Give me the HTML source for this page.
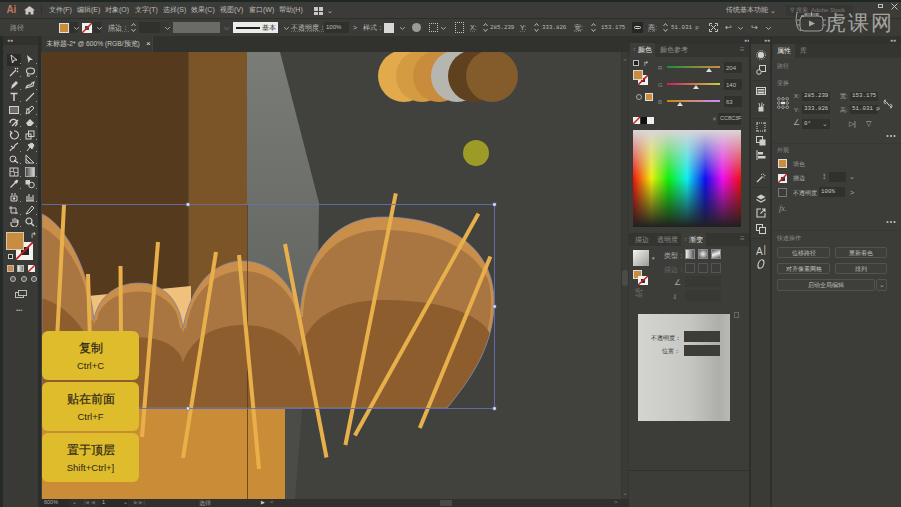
<!DOCTYPE html>
<html><head><meta charset="utf-8">
<style>
*{margin:0;padding:0;box-sizing:border-box}
html,body{width:901px;height:507px;overflow:hidden;background:#41423d;font-family:"Liberation Sans",sans-serif;color:#c4c4c0}
.a{position:absolute}
.t{position:absolute;white-space:nowrap;font-size:7px;line-height:1;color:#bdbdb8}
#menubar{left:0;top:0;width:901px;height:18px;background:#3b3c38;border-top:2px solid #1e2626}
#ctrl{left:0;top:18px;width:901px;height:18px;background:#3a3b37;border-top:1px solid #2e2f2c}
#tabs{left:41px;top:36px;width:588px;height:16px;background:#31322e}
#tool{left:0;top:36px;width:41px;height:471px;background:#393a36;border-left:3px solid #242a28;border-right:3px solid #2c2d2a}
#canvas{left:42px;top:52px;width:579px;height:447px;overflow:hidden}
#status{left:41px;top:499px;width:588px;height:8px;background:#30312e}
#vscroll{left:621px;top:52px;width:8px;height:447px;background:#353632}
#colp{left:629px;top:36px;width:120px;height:471px;background:#3c3d39}
#icons{left:749px;top:36px;width:23px;height:471px;background:#3a3b37;border-left:2px solid #2e2f2c;border-right:2px solid #2e2f2c}
#props{left:772px;top:36px;width:129px;height:471px;background:#3c3d39}
.pop{left:42px;width:97px;height:49px;background:#dfbc2b;border-radius:6px;text-align:center;color:#2e2a1a}
.p1{position:absolute;left:0;width:97px;top:9.5px;font-size:12px;line-height:14px;color:#2a2718;-webkit-text-stroke:0.2px #2a2718}
.p2{position:absolute;left:0;width:97px;top:28.5px;font-size:9.5px;line-height:11px;color:#2a2718}
</style></head><body>

<!-- CANVAS -->
<div id="canvas" class="a">
<svg width="579" height="447" viewBox="42 52 579 447">
  <defs>
    <linearGradient id="gcol" gradientUnits="userSpaceOnUse" x1="0" y1="52" x2="0" y2="409">
      <stop offset="0" stop-color="#7a7c77"/>
      <stop offset="1" stop-color="#5a5c57"/>
    </linearGradient>
  </defs>
  <rect x="0" y="0" width="700" height="600" fill="#41423d"/>
  <!-- dark brown -->
  <rect x="42" y="52" width="146" height="360" fill="#563a1e"/>
  <!-- light brown column -->
  <rect x="188.5" y="52" width="59.5" height="360" fill="#7b5427"/>
  <!-- gray slanted column -->
  <path d="M247 52 L280 52 L319 203 L316 409 L247 409 Z" fill="url(#gcol)"/>
  <path d="M285 409 L302 409 L295 499 L285 499 Z" fill="#4b4c48"/>
  <!-- peach background band -->
  <path d="M88 296 L191 286 L191 360 L88 360 Z" fill="#efc17c"/>
  <!-- bread -->
  <defs>
    <path id="bp" d="M42 214 C62 223 88 262 94 320 C97 300 113 283 139 283 C165 283 180 302 183 328 C190 290 210 261 243 261 C275 261 296 290 300 317 C302 262 330 217 383 217 C445 217 493 245 494 300 C495 345 470 380 447 408 L42 408 Z"/>
    <clipPath id="bc"><use href="#bp"/></clipPath>
  </defs>
  <use href="#bp" fill="#c98f4a"/>
  <g clip-path="url(#bc)">
    <use href="#bp" fill="#a97540" transform="translate(0,408) scale(1,0.932) translate(0,-408)"/>
    <path d="M42 214 C62 223 88 262 94 320 C97 300 113 283 139 283 C165 283 180 302 183 328 C190 290 210 261 243 261 C275 261 296 290 300 317 C302 262 330 217 383 217 C445 217 493 245 494 300 C495 345 470 380 447 408" fill="none" stroke="#c98f4a" stroke-width="6"/>
    <use href="#bp" fill="#8d5d2e" transform="translate(0,408) scale(1,0.565) translate(0,-408)"/>
  </g>
  <use href="#bp" fill="none" stroke="#7c82a6" stroke-width="0.8"/>
  <rect x="42" y="409" width="243" height="90" fill="#cb8c37"/>
  <line x1="247.5" y1="205" x2="247.5" y2="499" stroke="#5a3d1e" stroke-width="1" opacity="0.8"/>
  <!-- circles -->
  <circle cx="404" cy="76" r="26" fill="#e3aa4b"/>
  <circle cx="422" cy="76" r="26" fill="#d49b42"/>
  <circle cx="439" cy="76" r="26" fill="#c98c3c"/>
  <circle cx="457" cy="76" r="26" fill="#b6b6b1"/>
  <circle cx="474" cy="76" r="26" fill="#5f401f"/>
  <circle cx="492" cy="76" r="26" fill="#845b2a"/>
  <circle cx="476" cy="153" r="13" fill="#9d9b27"/>
  <!-- sticks -->
  <g stroke="#e8b04b" stroke-width="4" stroke-linecap="butt">
    <line x1="64" y1="205" x2="57" y2="340"/>
    <line x1="88" y1="274" x2="90" y2="340"/>
    <line x1="120.5" y1="266" x2="121" y2="340"/>
    <line x1="158" y1="242" x2="142" y2="437"/>
    <line x1="216" y1="252" x2="183" y2="458"/>
    <line x1="239" y1="255" x2="259" y2="469"/>
    <line x1="285" y1="244" x2="326.5" y2="457.5"/>
    <line x1="395.8" y1="193.4" x2="345.4" y2="445"/>
    <line x1="478.4" y1="213.6" x2="354.9" y2="435.5"/>
    <line x1="490.4" y1="256.5" x2="419.8" y2="428"/>
  </g>
  <!-- selection -->
  <rect x="30" y="204.5" width="464.5" height="204" fill="none" stroke="#6670aa" stroke-width="1" opacity="0.9"/>
  <g fill="#e8e8f0" stroke="#6a74b8" stroke-width="0.6">
    <rect x="186.5" y="203" width="3" height="3"/>
    <rect x="493" y="203" width="3" height="3"/>
    <rect x="493" y="305" width="3" height="3"/>
    <rect x="493" y="407" width="3" height="3"/>
    <rect x="186.5" y="407" width="3" height="3"/>
  </g>
</svg>
</div>

<!-- popup hints -->
<div class="a pop" style="top:331px"><div class="p1">复制</div><div class="p2">Ctrl+C</div></div>
<div class="a pop" style="top:382px"><div class="p1">贴在前面</div><div class="p2">Ctrl+F</div></div>
<div class="a pop" style="top:433px"><div class="p1">置于顶层</div><div class="p2">Shift+Ctrl+]</div></div>


<div id="menubar" class="a">
  <div class="t" style="left:6.5px;top:3px;font-size:10px;font-weight:bold;color:#c07660;letter-spacing:-0.2px">Ai</div>
  <svg class="a" style="left:24px;top:4px" width="11" height="8.5" viewBox="0 0 11 10" preserveAspectRatio="none"><path d="M5.5 0 L11 5 L9.5 5 L9.5 10 L6.5 10 L6.5 7 L4.5 7 L4.5 10 L1.5 10 L1.5 5 L0 5 Z" fill="#c8c8c4"/></svg>
  <div class="a" style="left:41px;top:2px;width:1px;height:10px;background:#30312d"></div>
  <div class="t" style="left:49px;top:3.8px">文件(F)</div>
  <div class="t" style="left:77px;top:3.8px">编辑(E)</div>
  <div class="t" style="left:105px;top:3.8px">对象(O)</div>
  <div class="t" style="left:135px;top:3.8px">文字(T)</div>
  <div class="t" style="left:163px;top:3.8px">选择(S)</div>
  <div class="t" style="left:191px;top:3.8px">效果(C)</div>
  <div class="t" style="left:220px;top:3.8px">视图(V)</div>
  <div class="t" style="left:249px;top:3.8px">窗口(W)</div>
  <div class="t" style="left:279px;top:3.8px">帮助(H)</div>
  <div class="a" style="left:314px;top:5px;width:9px;height:8px;background:#c8c8c4"></div><div class="a" style="left:314px;top:8.5px;width:9px;height:1px;background:#3b3c38"></div><div class="a" style="left:318px;top:5px;width:1px;height:8px;background:#3b3c38"></div>
  <div class="t" style="left:327px;top:5px;font-size:7px">&#8964;</div>
  <div class="t" style="left:726px;top:5px;font-size:6.5px">传统基本功能</div>
  <div class="t" style="left:770px;top:5px">&#8964;</div>
  <div class="a" style="left:786px;top:2.5px;width:67px;height:11px;background:#363733"></div>
  <div class="t" style="left:790px;top:5px;font-size:6px;color:#7a7a76">&#9906; 搜索 &nbsp;Adobe Stock</div>
  <div class="a" style="left:878px;top:2px;width:5px;height:4px;border:1px solid #c0c0bc"></div>
  <svg class="a" style="left:891px;top:1px" width="7" height="7"><path d="M0.5 0.5 L6.5 6.5 M6.5 0.5 L0.5 6.5" stroke="#c0c0bc" stroke-width="1"/></svg>
</div>
<div id="ctrl" class="a">
  <div class="a" style="left:70px;top:3px;width:8px;height:11px;background:#30312d"></div>
  <div class="a" style="left:93px;top:3px;width:8px;height:11px;background:#30312d"></div>
  <div class="t" style="left:10px;top:5px;color:#9a9a96">路径</div>
  <div class="a" style="left:59px;top:4px;width:10px;height:10px;background:#cc8c3f;border:1px solid #e0e0dc"></div>
  <svg class="a" style="left:73.0px;top:6.5px" width="7" height="5"><path d="M1.2 1.2 L3.5 3.4 L5.8 1.2" fill="none" stroke="#b8b8b4" stroke-width="0.9"/></svg>
  <div class="a" style="left:82px;top:4px;width:10px;height:10px;background:#f0f0f0"></div>
  <div class="a" style="left:85px;top:7px;width:4px;height:4px;background:#444"></div><svg class="a" style="left:82px;top:4px" width="10" height="10"><line x1="0" y1="10" x2="10" y2="0" stroke="#d02020" stroke-width="1.5"/></svg>
  <svg class="a" style="left:96.0px;top:6.5px" width="7" height="5"><path d="M1.2 1.2 L3.5 3.4 L5.8 1.2" fill="none" stroke="#b8b8b4" stroke-width="0.9"/></svg>
  <div class="t" style="left:108px;top:5px;text-decoration:underline dotted #6a6a66">描边：</div>
  <svg class="a" style="left:131px;top:3px" width="5" height="11"><path d="M0.5 4 L2.5 1.5 L4.5 4 M0.5 7 L2.5 9.5 L4.5 7" fill="none" stroke="#c0c0bc" stroke-width="0.9"/></svg>
  <div class="a" style="left:139px;top:3px;width:21px;height:11px;background:#30312d"></div><div class="a" style="left:160px;top:3px;width:9px;height:11px;background:#363733"></div>
  <svg class="a" style="left:164.0px;top:6.5px" width="7" height="5"><path d="M1.2 1.2 L3.5 3.4 L5.8 1.2" fill="none" stroke="#b8b8b4" stroke-width="0.9"/></svg>
  <div class="a" style="left:173px;top:3px;width:47px;height:11px;background:#6a6b67"></div><svg class="a" style="left:223px;top:6.5px" width="7" height="5"><path d="M0.7 0.8 L3.5 3.6 L6.3 0.8" fill="none" stroke="#5a5b57" stroke-width="1.1"/></svg>
  <div class="a" style="left:233px;top:3px;width:45px;height:11px;background:#ececea"></div>
  <div class="a" style="left:236px;top:8px;width:24px;height:1.5px;background:#202020"></div>
  <div class="t" style="left:262px;top:5.5px;font-size:6.5px;color:#333">基本</div>
  <svg class="a" style="left:283.0px;top:6.5px" width="7" height="5"><path d="M1.2 1.2 L3.5 3.4 L5.8 1.2" fill="none" stroke="#b8b8b4" stroke-width="0.9"/></svg>
  <div class="t" style="left:291px;top:5px;text-decoration:underline dotted #6a6a66">不透明度：</div>
  <div class="a" style="left:324px;top:3px;width:25px;height:11px;background:#30312d"></div>
  <div class="t" style="left:326px;top:5px;font-size:6px">100%</div>
  <div class="t" style="left:353px;top:5px">&gt;</div>
  <div class="t" style="left:363px;top:5px">样式：</div>
  <div class="a" style="left:384px;top:4px;width:10px;height:10px;background:#d8d8d6"></div>
  <svg class="a" style="left:399.0px;top:6.5px" width="7" height="5"><path d="M1.2 1.2 L3.5 3.4 L5.8 1.2" fill="none" stroke="#b8b8b4" stroke-width="0.9"/></svg>
  <div class="a" style="left:412px;top:4px;width:9px;height:9px;border-radius:50%;background:#9a9a96"></div>
  <div class="a" style="left:429px;top:4px;width:9px;height:9px;border:1px dotted #c0c0bc"></div>
  <svg class="a" style="left:440.0px;top:6.5px" width="7" height="5"><path d="M1.2 1.2 L3.5 3.4 L5.8 1.2" fill="none" stroke="#b8b8b4" stroke-width="0.9"/></svg>
  <div class="a" style="left:455px;top:3px;width:9px;height:11px;border:1px dotted #c0c0bc"></div>
  <div class="t" style="left:470px;top:5px;text-decoration:underline dotted #6a6a66">X:</div>
  <svg class="a" style="left:483px;top:3px" width="5" height="11"><path d="M0.5 4 L2.5 1.5 L4.5 4 M0.5 7 L2.5 9.5 L4.5 7" fill="none" stroke="#c0c0bc" stroke-width="0.9"/></svg>
  <div class="t" style="left:490px;top:5.5px;font-size:5.8px;font-family:'Liberation Mono',monospace;color:#b8b8b4">285.239</div>
  <div class="t" style="left:520px;top:5px;text-decoration:underline dotted #6a6a66">Y:</div>
  <svg class="a" style="left:534px;top:3px" width="5" height="11"><path d="M0.5 4 L2.5 1.5 L4.5 4 M0.5 7 L2.5 9.5 L4.5 7" fill="none" stroke="#c0c0bc" stroke-width="0.9"/></svg>
  <div class="t" style="left:542px;top:5.5px;font-size:5.8px;font-family:'Liberation Mono',monospace;color:#b8b8b4">333.826</div>
  <div class="t" style="left:574px;top:5px;text-decoration:underline dotted #6a6a66">宽:</div>
  <svg class="a" style="left:591px;top:3px" width="5" height="11"><path d="M0.5 4 L2.5 1.5 L4.5 4 M0.5 7 L2.5 9.5 L4.5 7" fill="none" stroke="#c0c0bc" stroke-width="0.9"/></svg>
  <div class="t" style="left:601px;top:5.5px;font-size:5.8px;font-family:'Liberation Mono',monospace;color:#b8b8b4">153.175</div>
  <div class="a" style="left:632px;top:3px;width:11px;height:11px;background:#262724"></div>
  <div class="a" style="left:634px;top:7px;width:7px;height:3px;border:1px solid #d0d0cc;border-radius:2px"></div>
  <div class="t" style="left:648px;top:5px;text-decoration:underline dotted #6a6a66">高:</div>
  <svg class="a" style="left:663px;top:3px" width="5" height="11"><path d="M0.5 4 L2.5 1.5 L4.5 4 M0.5 7 L2.5 9.5 L4.5 7" fill="none" stroke="#c0c0bc" stroke-width="0.9"/></svg>
  <div class="t" style="left:671px;top:5.5px;font-size:5.8px;font-family:'Liberation Mono',monospace;color:#b8b8b4">51.031 p</div>
  <svg class="a" style="left:709px;top:4px" width="9" height="9"><path d="M0.5 3 V0.5 H3 M6 0.5 H8.5 V3 M8.5 6 V8.5 H6 M3 8.5 H0.5 V6 M2 2 L7 7 M7 2 L2 7" fill="none" stroke="#c4c4c0" stroke-width="1"/></svg>
  <div class="t" style="left:725px;top:5px;font-size:8px">&#8617;</div>
  <svg class="a" style="left:737.0px;top:6.5px" width="7" height="5"><path d="M1.2 1.2 L3.5 3.4 L5.8 1.2" fill="none" stroke="#b8b8b4" stroke-width="0.9"/></svg>
  <div class="t" style="left:751px;top:5px;font-size:8px">&#8618;</div>
  <svg class="a" style="left:765.0px;top:6.5px" width="7" height="5"><path d="M1.2 1.2 L3.5 3.4 L5.8 1.2" fill="none" stroke="#b8b8b4" stroke-width="0.9"/></svg>
</div>
<div id="tabs" class="a">
  <div class="a" style="left:1px;top:0;width:111px;height:16px;background:#393a36;border-right:1px solid #42433f"></div>
  <div class="t" style="left:5px;top:5px;font-size:6.7px;color:#c8c8c4">未标题-2* @ 600% (RGB/预览)</div>
  <div class="t" style="left:105px;top:4px;font-size:8px;color:#e0e0dc">&#215;</div>
</div>
<div id="tool" class="a">
<div class="a" style="left:0;top:0;width:35px;height:9px;background:#31322e"></div>
<div class="t" style="left:4px;top:2px;font-size:5px;line-height:5px;color:#aaa">&#9679;&#9679;</div>
<div class="a" style="left:4px;top:18px;width:13.5px;height:11.5px;background:#2b2c29"></div>
<svg class="a" style="left:6px;top:18px" width="10" height="10"><path d="M2 1 L8 6 L5 6 L3.5 9 Z" fill="none" stroke="#d0d0cc" stroke-width="1"/></svg>
<svg class="a" style="left:22px;top:18px" width="10" height="10"><path d="M2 1 L8 6 L5 6 L3.5 9 Z" fill="#d0d0cc"/></svg>
<div class="a" style="left:17px;top:27px;width:1px;height:1px;background:#999"></div>
<div class="a" style="left:33px;top:27px;width:1px;height:1px;background:#999"></div>
<svg class="a" style="left:6px;top:31px" width="10" height="10"><path d="M1 9 L7 3 M6 1 L7 2 M8 1 L9 2 M8 4 L9 5" stroke="#d0d0cc" stroke-width="1.1"/></svg>
<svg class="a" style="left:22px;top:31px" width="10" height="10"><ellipse cx="5.5" cy="4" rx="4" ry="3" fill="none" stroke="#d0d0cc" stroke-width="1.1"/><path d="M3 7 L2 9 L5 9" fill="none" stroke="#d0d0cc"/></svg>
<div class="a" style="left:17px;top:40px;width:1px;height:1px;background:#999"></div>
<div class="a" style="left:33px;top:40px;width:1px;height:1px;background:#999"></div>
<svg class="a" style="left:6px;top:43.599999999999994px" width="10" height="10"><path d="M2 9 L3 5 L7 1 L9 3 L5 7 Z" fill="#d0d0cc"/></svg>
<svg class="a" style="left:22px;top:43.599999999999994px" width="10" height="10"><path d="M1 8 C3 2 5 8 7 3 L9 2 L8 6 Z" fill="none" stroke="#d0d0cc" stroke-width="1.1"/></svg>
<div class="a" style="left:17px;top:52.599999999999994px;width:1px;height:1px;background:#999"></div>
<div class="a" style="left:33px;top:52.599999999999994px;width:1px;height:1px;background:#999"></div>
<svg class="a" style="left:6px;top:56px" width="10" height="10"><path d="M1.5 1.5 H8.5 M5 1.5 V9" stroke="#d0d0cc" stroke-width="1.5"/></svg>
<svg class="a" style="left:22px;top:56px" width="10" height="10"><path d="M1 9 L9 1" stroke="#d0d0cc" stroke-width="1.1"/></svg>
<div class="a" style="left:17px;top:65px;width:1px;height:1px;background:#999"></div>
<div class="a" style="left:33px;top:65px;width:1px;height:1px;background:#999"></div>
<svg class="a" style="left:6px;top:68.5px" width="10" height="10"><rect x="0.5" y="1.5" width="9" height="7" fill="#6a6b67" stroke="#d0d0cc" stroke-width="1"/></svg>
<svg class="a" style="left:22px;top:68.5px" width="10" height="10"><path d="M1 9 L2 5 L7 1 L9 3 L5 7 Z M1 4 H4 V9" fill="none" stroke="#d0d0cc" stroke-width="1"/></svg>
<div class="a" style="left:17px;top:77.5px;width:1px;height:1px;background:#999"></div>
<div class="a" style="left:33px;top:77.5px;width:1px;height:1px;background:#999"></div>
<svg class="a" style="left:6px;top:81px" width="10" height="10"><path d="M1 6 A3.5 3.5 0 1 1 6 9 M3 9 L9 3" fill="none" stroke="#d0d0cc" stroke-width="1.3"/></svg>
<svg class="a" style="left:22px;top:81px" width="10" height="10"><path d="M1 6 L5 2 L9 6 L6 9 L3 9 Z" fill="#d0d0cc"/></svg>
<div class="a" style="left:17px;top:90px;width:1px;height:1px;background:#999"></div>
<div class="a" style="left:33px;top:90px;width:1px;height:1px;background:#999"></div>
<svg class="a" style="left:6px;top:93.6px" width="10" height="10"><path d="M2 3 A4 4 0 1 0 5 1 M1 1 L3 3 L1 5" fill="none" stroke="#d0d0cc" stroke-width="1.1"/></svg>
<svg class="a" style="left:22px;top:93.6px" width="10" height="10"><rect x="1" y="4" width="5" height="5" fill="none" stroke="#d0d0cc"/><rect x="3.5" y="1" width="5.5" height="5.5" fill="none" stroke="#d0d0cc"/></svg>
<div class="a" style="left:17px;top:102.6px;width:1px;height:1px;background:#999"></div>
<div class="a" style="left:33px;top:102.6px;width:1px;height:1px;background:#999"></div>
<svg class="a" style="left:6px;top:106px" width="10" height="10"><path d="M1 9 C3 5 5 8 6 3 L9 1 M2 4 L5 6" fill="none" stroke="#d0d0cc" stroke-width="1.2"/></svg>
<svg class="a" style="left:22px;top:106px" width="10" height="10"><path d="M2 9 L5 5 M3 3 L7 1 L9 3 L7 7 Z" fill="#d0d0cc" stroke="#d0d0cc"/></svg>
<div class="a" style="left:17px;top:115px;width:1px;height:1px;background:#999"></div>
<div class="a" style="left:33px;top:115px;width:1px;height:1px;background:#999"></div>
<svg class="a" style="left:6px;top:117.5px" width="10" height="10"><circle cx="4" cy="5" r="3" fill="none" stroke="#d0d0cc"/><path d="M5 6 L9 9" stroke="#d0d0cc" stroke-width="1.3"/></svg>
<svg class="a" style="left:22px;top:117.5px" width="10" height="10"><path d="M1 1 V9 H9 L1 1 M1 5 L5 9" fill="none" stroke="#d0d0cc"/></svg>
<div class="a" style="left:17px;top:126.5px;width:1px;height:1px;background:#999"></div>
<div class="a" style="left:33px;top:126.5px;width:1px;height:1px;background:#999"></div>
<svg class="a" style="left:6px;top:131px" width="10" height="10"><rect x="1" y="1" width="8" height="8" fill="none" stroke="#d0d0cc"/><path d="M1 5 C4 3 6 7 9 5 M5 1 C3 4 7 6 5 9" fill="none" stroke="#d0d0cc" stroke-width="0.8"/></svg>
<svg class="a" style="left:22px;top:131px" width="10" height="10"><defs><linearGradient id="tg1"><stop offset="0" stop-color="#444"/><stop offset="1" stop-color="#ddd"/></linearGradient></defs><rect x="0.5" y="0.5" width="9" height="9" fill="url(#tg1)" stroke="#bbb" stroke-width="0.8"/></svg>
<div class="a" style="left:17px;top:140px;width:1px;height:1px;background:#999"></div>
<div class="a" style="left:33px;top:140px;width:1px;height:1px;background:#999"></div>
<svg class="a" style="left:6px;top:143px" width="10" height="10"><path d="M1.5 8.5 L6 4" stroke="#d0d0cc" stroke-width="1.3"/><path d="M5 3 L7 1 Q8.5 0.5 9 1.5 Q9.5 2.5 8 4 L7 5 Z" fill="#d0d0cc"/></svg>
<svg class="a" style="left:22px;top:143px" width="10" height="10"><rect x="0.5" y="1" width="4.5" height="4.5" fill="#d0d0cc"/><circle cx="6.5" cy="6" r="2.8" fill="none" stroke="#d0d0cc"/></svg>
<div class="a" style="left:17px;top:152px;width:1px;height:1px;background:#999"></div>
<div class="a" style="left:33px;top:152px;width:1px;height:1px;background:#999"></div>
<svg class="a" style="left:6px;top:156px" width="10" height="10"><path d="M3 1 V3 M6 1 V3 M2 4 H8 V9 H2 Z" fill="none" stroke="#d0d0cc"/><circle cx="5" cy="6.5" r="1.3" fill="#d0d0cc"/></svg>
<svg class="a" style="left:22px;top:156px" width="10" height="10"><path d="M1 9 H9 M2 9 V4 M4 9 V2 M6 9 V5 M8 9 V3" stroke="#d0d0cc" stroke-width="1.1"/></svg>
<div class="a" style="left:17px;top:165px;width:1px;height:1px;background:#999"></div>
<div class="a" style="left:33px;top:165px;width:1px;height:1px;background:#999"></div>
<svg class="a" style="left:6px;top:169px" width="10" height="10"><path d="M2 1 V8 H9 M0 3 H7 V9" fill="none" stroke="#d0d0cc"/></svg>
<svg class="a" style="left:22px;top:169px" width="10" height="10"><path d="M1 9 L3 6 L7 1 L9 3 L4 8 Z" fill="none" stroke="#d0d0cc"/></svg>
<div class="a" style="left:17px;top:178px;width:1px;height:1px;background:#999"></div>
<div class="a" style="left:33px;top:178px;width:1px;height:1px;background:#999"></div>
<svg class="a" style="left:6px;top:180.5px" width="10" height="10"><path d="M2 5 V8 Q3 10 6 10 Q9 9 9 6 V3 M4 6 V1.5 M6 6 V1 M8 6 V2" fill="none" stroke="#d0d0cc" stroke-width="1.1"/></svg>
<svg class="a" style="left:22px;top:180.5px" width="10" height="10"><circle cx="4" cy="4" r="3" fill="none" stroke="#d0d0cc" stroke-width="1.2"/><path d="M6 6 L9 9" stroke="#d0d0cc" stroke-width="1.5"/></svg>
<div class="a" style="left:17px;top:189.5px;width:1px;height:1px;background:#999"></div>
<div class="a" style="left:33px;top:189.5px;width:1px;height:1px;background:#999"></div>
<div class="a" style="left:13px;top:206px;width:17px;height:17.5px;background:#f2f2f0"></div>
<div class="a" style="left:18px;top:210.5px;width:7.5px;height:8px;background:#232323"></div>
<svg class="a" style="left:13px;top:206px" width="17" height="18"><line x1="0" y1="17.5" x2="17" y2="0" stroke="#c82020" stroke-width="1.8"/></svg>
<div class="a" style="left:3.3px;top:196.3px;width:17.5px;height:17.7px;background:#c98d42;border:1px solid #d8c8a8"></div>
<div class="t" style="left:27px;top:196px;font-size:8px;color:#ccc">&#8625;</div>
<div class="a" style="left:5px;top:218px;width:5px;height:5px;border:1px solid #ccc;background:#222"></div>
<div class="a" style="left:4px;top:229px;width:7px;height:7px;background:#cc8c3f;border:1px solid #bbb"></div>
<div class="a" style="left:14px;top:229px;width:7px;height:7px;background:linear-gradient(90deg,#eee,#777);border:1px solid #bbb"></div>
<div class="a" style="left:25px;top:229px;width:7px;height:7px;background:#eee"></div>
<svg class="a" style="left:25px;top:229px" width="7" height="7"><line x1="0" y1="7" x2="7" y2="0" stroke="#c82020" stroke-width="1.3"/></svg>
<div class="a" style="left:7px;top:240px;width:6px;height:6px;border-radius:50%;border:1px solid #bbb;background:#555"></div>
<div class="a" style="left:18px;top:240px;width:6px;height:6px;border-radius:50%;border:1px solid #bbb;background:#555"></div>
<div class="a" style="left:28px;top:240px;width:6px;height:6px;border-radius:50%;border:1px solid #bbb;background:#555"></div>
<div class="a" style="left:12px;top:256px;width:9px;height:6px;border:1px solid #bbb"></div>
<div class="a" style="left:15px;top:254px;width:9px;height:6px;border:1px solid #bbb;background:#393a36"></div>
<div class="t" style="left:13px;top:271px;font-size:6px;color:#aaa">&#8226;&#8226;&#8226;</div>
</div>
<div id="status" class="a">
  <div class="a" style="left:0;top:0;width:28px;height:8px;background:#2a2b28"></div>
  <div class="t" style="left:3px;top:1px;font-size:5.5px;color:#aaa">600%</div>
  <div class="t" style="left:31px;top:0px;font-size:6px;color:#999">&#8964;</div>
  <div class="t" style="left:43px;top:1px;font-size:5px;color:#666">|&#9664; &#9664;</div>
  <div class="a" style="left:59px;top:0;width:28px;height:8px;background:#2a2b28"></div>
  <div class="t" style="left:61px;top:1px;font-size:5.5px;color:#bbb">1</div>
  <div class="t" style="left:82px;top:0px;font-size:6px;color:#999">&#8964;</div>
  <div class="t" style="left:93px;top:1px;font-size:5px;color:#666">&#9654; &#9654;|</div>
  <div class="t" style="left:158px;top:1px;font-size:6px;color:#999">选择</div>
  <div class="t" style="left:220px;top:1px;font-size:5px;color:#ccc">&#9654;</div>
  <div class="t" style="left:229px;top:0px;font-size:6px;color:#888">&lt;</div>
  <div class="a" style="left:399px;top:1px;width:12px;height:6px;background:#4a4b47;border-radius:1px"></div>
  <div class="t" style="left:573px;top:0px;font-size:6px;color:#888">&gt;</div>
</div>

<div id="vscroll" class="a">
  <div class="a" style="left:1px;top:0;width:6px;height:447px;background:#3a3b37"></div>
  <div class="t" style="left:1px;top:6px;font-size:7px;color:#777">&#8963;</div>
  <div class="a" style="left:1px;top:218px;width:6px;height:16px;border-radius:3px;background:#4a4b47"></div>
  <div class="t" style="left:1px;top:437px;font-size:7px;color:#777">&#8964;</div>
</div>
<div id="colp" class="a">
  <div class="a" style="left:0;top:0;width:120px;height:8px;background:#31322e"></div>
  <div class="t" style="left:115px;top:2px;font-size:5px;line-height:5px;color:#aaa">&#9679;&#9679;</div>
  <div class="a" style="left:0;top:8px;width:120px;height:13px;background:#343531"></div>
  <div class="a" style="left:1px;top:7px;width:25px;height:14px;background:#3d3e3a"></div>
  <div class="t" style="left:4px;top:11px;font-size:5px;color:#888">&#8597;</div>
  <div class="t" style="left:9px;top:11px;font-size:6.6px;color:#e4e4e0">颜色</div>
  <div class="t" style="left:31px;top:11px;font-size:6.6px;color:#8c8c88">颜色参考</div>
  <div class="t" style="left:111px;top:10px;font-size:8px;color:#777">&#8801;</div>
  <!-- fill stroke -->
  <div class="a" style="left:4px;top:24px;width:6px;height:6px;border:1px solid #bbb;background:#222"></div>
  <div class="t" style="left:14px;top:24px;font-size:7px;color:#ccc">&#8625;</div>
  <div class="a" style="left:9px;top:39px;width:10px;height:10px;background:#f2f2f0"></div>
  <div class="a" style="left:12px;top:42px;width:4px;height:4px;background:#333"></div><svg class="a" style="left:9px;top:39px" width="10" height="10"><line x1="0" y1="10" x2="10" y2="0" stroke="#c82020" stroke-width="1.6"/></svg>
  <div class="a" style="left:4px;top:34px;width:10px;height:10px;background:#cc8c3f;border:1px solid #d8d8d4"></div>
  <div class="a" style="left:7px;top:58px;width:6px;height:6px;border:1px solid #aaa;border-radius:50%"></div>
  <div class="a" style="left:16px;top:57px;width:8px;height:8px;background:#cc8c3f;border:1px solid #ddd"></div>
  <!-- sliders -->
  <div class="t" style="left:29px;top:29px;font-size:6px;color:#888">R</div>
  <div class="a" style="left:38px;top:30px;width:53px;height:2px;background:linear-gradient(90deg,#1f8c3f,#cc8c3f)"></div>
  <div class="a" style="left:77px;top:32px;width:0;height:0;border-left:3px solid transparent;border-right:3px solid transparent;border-bottom:4px solid #ddd"></div>
  <div class="a" style="left:95px;top:26px;width:18px;height:11px;background:#30312d"></div>
  <div class="t" style="left:97px;top:29px;font-size:6px;color:#bbb">204</div>
  <div class="t" style="left:29px;top:46px;font-size:6px;color:#888">G</div>
  <div class="a" style="left:38px;top:47px;width:53px;height:2px;background:linear-gradient(90deg,#cc1f5f,#cccc3f)"></div>
  <div class="a" style="left:64px;top:49px;width:0;height:0;border-left:3px solid transparent;border-right:3px solid transparent;border-bottom:4px solid #ddd"></div>
  <div class="a" style="left:95px;top:43px;width:18px;height:11px;background:#30312d"></div>
  <div class="t" style="left:97px;top:46px;font-size:6px;color:#bbb">140</div>
  <div class="t" style="left:29px;top:63px;font-size:6px;color:#888">B</div>
  <div class="a" style="left:38px;top:64px;width:53px;height:2px;background:linear-gradient(90deg,#cc8c00,#cc8cff)"></div>
  <div class="a" style="left:48px;top:66px;width:0;height:0;border-left:3px solid transparent;border-right:3px solid transparent;border-bottom:4px solid #ddd"></div>
  <div class="a" style="left:95px;top:60px;width:18px;height:11px;background:#30312d"></div>
  <div class="t" style="left:97px;top:63px;font-size:6px;color:#bbb">63</div>
  <!-- swatches -->
  <div class="a" style="left:4px;top:81px;width:7px;height:7px;background:#f0f0f0"></div>
  <svg class="a" style="left:4px;top:81px" width="7" height="7"><line x1="0" y1="7" x2="7" y2="0" stroke="#c82020" stroke-width="1.3"/></svg>
  <div class="a" style="left:12px;top:81px;width:6px;height:7px;background:#111"></div>
  <div class="a" style="left:18px;top:81px;width:7px;height:7px;background:#eee"></div>
  <div class="t" style="left:84px;top:81px;font-size:5px;color:#888">#</div>
  <div class="a" style="left:89px;top:77px;width:23px;height:12px;background:#30312d"></div>
  <div class="t" style="left:91px;top:80px;font-size:5.5px;color:#bbb">CC8C3F</div>
  <!-- spectrum -->
  <div class="a" style="left:4px;top:94px;width:108px;height:97px;background:linear-gradient(90deg,#ff0000 0%,#ffff00 17%,#00ff00 33%,#00ffff 50%,#0000ff 67%,#ff00ff 83%,#ff0000 100%)"></div>
  <div class="a" style="left:4px;top:94px;width:108px;height:97px;background:linear-gradient(180deg,rgba(232,226,230,1) 0%,rgba(232,226,230,0) 50%,rgba(20,20,20,0) 50%,rgba(20,20,20,1) 100%)"></div>
  <div class="a" style="left:4px;top:94px;width:108px;height:97px;background:rgba(120,120,120,0.12)"></div>
  <!-- gradient panel tabs -->
  <div class="a" style="left:0;top:197px;width:120px;height:13px;background:#343531"></div>
  <div class="t" style="left:6px;top:200px;font-size:7px;color:#8c8c88">描边</div>
  <div class="t" style="left:28px;top:200px;font-size:7px;color:#8c8c88">透明度</div>
  <div class="a" style="left:52px;top:197px;width:25px;height:13px;background:#3d3e3a"></div>
  <div class="t" style="left:55px;top:201px;font-size:5px;color:#888">&#8597;</div>
  <div class="t" style="left:60px;top:200px;font-size:7px;color:#e4e4e0">渐变</div>
  <div class="t" style="left:111px;top:199px;font-size:8px;color:#777">&#8801;</div>
  <div class="a" style="left:4px;top:214px;width:16px;height:16px;background:linear-gradient(135deg,#f4f4f2,#9a9a96)"></div>
  <div class="t" style="left:23px;top:220px;font-size:5px;color:#aaa">&#9662;</div>
  <div class="a" style="left:4px;top:234px;width:9px;height:9px;background:#cc8c3f;border:1px solid #ddd"></div>
  <div class="a" style="left:9px;top:240px;width:10px;height:9px;background:#f2f2f0"></div>
  <div class="a" style="left:12px;top:243px;width:4px;height:3.5px;background:#333"></div><svg class="a" style="left:9px;top:240px" width="10" height="9"><line x1="0" y1="9" x2="10" y2="0" stroke="#c82020" stroke-width="1.5"/></svg>
  <div class="t" style="left:6px;top:252px;font-size:5px;color:#777">描+<br>+轮</div>
  <div class="t" style="left:35px;top:217px;font-size:6.5px;color:#aaa">类型：</div>
  <div class="a" style="left:56px;top:213px;width:10px;height:10px;background:linear-gradient(90deg,#eee,#555);border:1px solid #888"></div>
  <div class="a" style="left:69px;top:213px;width:10px;height:10px;background:radial-gradient(#eee,#555);border:1px solid #888"></div>
  <div class="a" style="left:82px;top:213px;width:10px;height:10px;background:linear-gradient(160deg,#555,#eee,#555);border:1px solid #888"></div>
  <div class="t" style="left:35px;top:231px;font-size:6.5px;color:#666">描边：</div>
  <div class="a" style="left:56px;top:227px;width:10px;height:10px;border:1px solid #555"></div>
  <div class="a" style="left:69px;top:227px;width:10px;height:10px;border:1px solid #555"></div>
  <div class="a" style="left:82px;top:227px;width:10px;height:10px;border:1px solid #555"></div>
  <div class="t" style="left:45px;top:243px;font-size:8px;color:#aaa">&#8736;</div>
  <div class="a" style="left:56px;top:240px;width:36px;height:11px;background:#383935"></div>
  <div class="t" style="left:44px;top:257px;font-size:7px;color:#aaa">&#9102;</div>
  <div class="a" style="left:56px;top:254px;width:36px;height:11px;background:#383935"></div>
  <!-- gradient preview -->
  <div class="a" style="left:9px;top:278px;width:92px;height:107px;background:linear-gradient(90deg,#d4d4d0 0%,#c6c6c2 55%,#aeaeaa 88%,#b8b8b4 100%)"></div>
  <div class="t" style="left:22px;top:299px;font-size:6px;color:#333">不透明度：</div>
  <div class="a" style="left:55px;top:295px;width:36px;height:11px;background:#3c3d39"></div>
  <div class="t" style="left:33px;top:312px;font-size:6px;color:#333">位置：</div>
  <div class="a" style="left:55px;top:309px;width:36px;height:11px;background:#3c3d39"></div>
  <div class="a" style="left:105px;top:276px;width:5px;height:6px;border:1px solid #666"></div>
  <div class="a" style="left:0;top:434px;width:120px;height:1px;background:#30312d"></div>
</div>
<div id="icons" class="a">
  <div class="a" style="left:0;top:0;width:19px;height:8px;background:#31322e"></div>
  <div class="t" style="left:13px;top:2px;font-size:5px;line-height:5px;color:#aaa">&#9679;&#9679;</div>
  <div class="a" style="left:0;top:8px;width:19px;height:22px;background:#3e3f3b"></div>
  <svg class="a" style="left:5px;top:13.7px" width="10" height="10"><circle cx="5" cy="5" r="3.2" fill="#cfcfcb"/><circle cx="5" cy="5" r="4.5" fill="none" stroke="#cfcfcb" stroke-width="0.8" stroke-dasharray="1 1"/></svg>
  <svg class="a" style="left:5px;top:29.0px" width="10" height="10"><rect x="3.5" y="0.5" width="6" height="6" fill="none" stroke="#cfcfcb"/><circle cx="3" cy="7" r="2.3" fill="#3a3b37" stroke="#cfcfcb"/></svg>
  <svg class="a" style="left:5px;top:50.4px" width="10" height="10"><rect x="0.5" y="1.5" width="9" height="7" fill="none" stroke="#cfcfcb"/><rect x="1.5" y="3" width="7" height="1.5" fill="#cfcfcb"/><rect x="1.5" y="5.5" width="7" height="2" fill="#cfcfcb"/></svg>
  <svg class="a" style="left:5px;top:65.8px" width="10" height="10"><path d="M3 1 L4 5 M6 0.5 L5.5 5 M8 2 L6.5 5" stroke="#cfcfcb" stroke-width="0.9"/><rect x="2.5" y="5" width="5" height="4.5" fill="#cfcfcb"/></svg>
  <svg class="a" style="left:5px;top:86.0px" width="10" height="10"><rect x="1" y="1" width="8" height="8" fill="none" stroke="#cfcfcb" stroke-dasharray="1 1"/><circle cx="1" cy="1" r="0.8" fill="#cfcfcb"/><circle cx="9" cy="1" r="0.8" fill="#cfcfcb"/><circle cx="1" cy="9" r="0.8" fill="#cfcfcb"/><circle cx="9" cy="9" r="0.8" fill="#cfcfcb"/></svg>
  <svg class="a" style="left:5px;top:100.0px" width="10" height="10"><rect x="0.5" y="0.5" width="6" height="6" fill="none" stroke="#cfcfcb"/><rect x="3.5" y="3.5" width="6" height="6" fill="#cfcfcb"/></svg>
  <svg class="a" style="left:5px;top:114.4px" width="10" height="10"><path d="M1 0 V10" stroke="#cfcfcb"/><rect x="2" y="2" width="5" height="2.5" fill="#cfcfcb"/><rect x="2" y="6" width="7.5" height="2.5" fill="#cfcfcb"/></svg>
  <svg class="a" style="left:5px;top:136.8px" width="10" height="10"><path d="M1 9 L6.5 3.5" stroke="#cfcfcb" stroke-width="1.2"/><path d="M7 0.5 L7.5 2 M9.5 2.5 L8 3 M8.5 5 L7.5 4.3 M5 1 L6 2" stroke="#cfcfcb" stroke-width="0.8"/></svg>
  <svg class="a" style="left:5px;top:158.0px" width="10" height="10"><path d="M5 0.5 L9.5 3 L5 5.5 L0.5 3 Z" fill="#cfcfcb"/><path d="M0.5 5.5 L5 8 L9.5 5.5" fill="none" stroke="#cfcfcb" stroke-width="1.2"/></svg>
  <svg class="a" style="left:5px;top:172.3px" width="10" height="10"><path d="M5 1 H1 V9 H9 V5" fill="none" stroke="#cfcfcb" stroke-width="1.1"/><path d="M4.5 5.5 L9 1 M6 1 H9 V4" fill="none" stroke="#cfcfcb" stroke-width="1.1"/></svg>
  <svg class="a" style="left:5px;top:187.7px" width="10" height="10"><rect x="0.5" y="0.5" width="6" height="6" fill="none" stroke="#cfcfcb"/><rect x="3.5" y="3.5" width="6" height="6" fill="#3a3b37" stroke="#cfcfcb"/></svg>
  <svg class="a" style="left:5px;top:209.0px" width="10" height="10"><text x="0" y="9.5" font-size="10" font-family="Liberation Sans" fill="#cfcfcb">A</text><path d="M8.8 0 V10" stroke="#cfcfcb" stroke-width="0.8"/></svg>
  <svg class="a" style="left:5px;top:223.0px" width="10" height="10"><ellipse cx="5" cy="5" rx="2.8" ry="4.3" fill="none" stroke="#cfcfcb" stroke-width="1.1" transform="skewX(-12) translate(1 0)"/></svg>
  <div class="a" style="left:1px;top:43.5px;width:17px;height:1px;background:#33342f"></div>
  <div class="a" style="left:1px;top:81.5px;width:17px;height:1px;background:#33342f"></div>
  <div class="a" style="left:1px;top:151.0px;width:17px;height:1px;background:#33342f"></div>
  <div class="a" style="left:1px;top:202.0px;width:17px;height:1px;background:#33342f"></div>
</div>
<div id="props" class="a">
  <div class="a" style="left:0;top:0;width:129px;height:8px;background:#31322e"></div>
  <div class="t" style="left:118px;top:2px;font-size:5px;line-height:5px;color:#aaa">&#9679;&#9679;</div>
  <div class="a" style="left:0;top:8px;width:129px;height:14px;background:#343531"></div>
  <div class="a" style="left:1px;top:8px;width:22px;height:14px;background:#3d3e3a"></div>
  <div class="t" style="left:5px;top:12px;font-size:6.6px;color:#e4e4e0">属性</div>
  <div class="t" style="left:28px;top:12px;font-size:6.6px;color:#8c8c88">库</div>
  <div class="t" style="left:5px;top:28px;font-size:5.5px;color:#8c8c88">路径</div>
  <div class="t" style="left:5px;top:45px;font-size:5.5px;color:#8c8c88">变换</div>
  <svg class="a" style="left:5px;top:61px" width="12" height="12"><circle cx="1.8" cy="1.8" r="1.3" fill="none" stroke="#bbb" stroke-width="0.7"/><circle cx="1.8" cy="6.0" r="1.3" fill="none" stroke="#bbb" stroke-width="0.7"/><circle cx="1.8" cy="10.200000000000001" r="1.3" fill="none" stroke="#bbb" stroke-width="0.7"/><circle cx="6.0" cy="1.8" r="1.3" fill="none" stroke="#bbb" stroke-width="0.7"/><circle cx="6.0" cy="10.200000000000001" r="1.3" fill="none" stroke="#bbb" stroke-width="0.7"/><circle cx="10.200000000000001" cy="1.8" r="1.3" fill="none" stroke="#bbb" stroke-width="0.7"/><circle cx="10.200000000000001" cy="6.0" r="1.3" fill="none" stroke="#bbb" stroke-width="0.7"/><circle cx="10.200000000000001" cy="10.200000000000001" r="1.3" fill="none" stroke="#bbb" stroke-width="0.7"/><rect x="4" y="4.8" width="4" height="2.4" fill="#ddd"/></svg>
  <div class="t" style="left:22px;top:57px;font-size:6px;color:#aaa">X:</div>
  <div class="a" style="left:30px;top:56px;width:28px;height:9px;background:#30312d"></div>
  <div class="t" style="left:32px;top:57px;font-size:6.5px;color:#c8c8c4;font-family:'Liberation Mono',monospace;font-size:5.8px">285.239</div>
  <div class="t" style="left:68px;top:57px;font-size:6px;color:#aaa">宽:</div>
  <div class="a" style="left:78px;top:56px;width:28px;height:9px;background:#30312d"></div>
  <div class="t" style="left:80px;top:57px;font-size:6.5px;color:#c8c8c4;font-family:'Liberation Mono',monospace;font-size:5.8px">153.175</div>
  <div class="t" style="left:22px;top:71px;font-size:6px;color:#aaa">Y:</div>
  <div class="a" style="left:30px;top:69px;width:28px;height:9px;background:#30312d"></div>
  <div class="t" style="left:32px;top:70px;font-size:6.5px;color:#c8c8c4;font-family:'Liberation Mono',monospace;font-size:5.8px">333.826</div>
  <div class="t" style="left:68px;top:71px;font-size:6px;color:#aaa">高:</div>
  <div class="a" style="left:78px;top:69px;width:28px;height:9px;background:#30312d"></div>
  <div class="t" style="left:80px;top:70px;font-size:6.5px;color:#c8c8c4;font-family:'Liberation Mono',monospace;font-size:5.8px">51.031 p</div>
  <svg class="a" style="left:111px;top:63px" width="10" height="10"><path d="M3 1 Q1 1 1 3 Q1 4.5 3 5 M7 5 Q9 5.5 9 7 Q9 9 7 9 M3.5 3 L6.5 7 M1 1 L9 9" fill="none" stroke="#c0c0bc" stroke-width="1"/></svg>
  <div class="t" style="left:21px;top:83px;font-size:8px;color:#aaa">&#8736;</div>
  <div class="a" style="left:30px;top:83px;width:28px;height:10px;background:#30312d"></div>
  <div class="t" style="left:32px;top:85px;font-size:6.5px;color:#c8c8c4;font-family:'Liberation Mono',monospace;font-size:5.8px">0°</div>
  <div class="t" style="left:50px;top:84px;font-size:7px;color:#aaa">&#8964;</div>
  <div class="t" style="left:77px;top:84px;font-size:7px;color:#bbb">&#9655;|</div>
  <div class="t" style="left:94px;top:84px;font-size:7px;color:#bbb">&#9661;</div>
  <svg class="a" style="left:114px;top:98px" width="10" height="4"><circle cx="1.5" cy="2" r="1.1" fill="#c0c0bc"/><circle cx="5" cy="2" r="1.1" fill="#c0c0bc"/><circle cx="8.5" cy="2" r="1.1" fill="#c0c0bc"/></svg>
  <div class="a" style="left:0;top:107px;width:129px;height:1px;background:#373834"></div>
  <div class="t" style="left:5px;top:112px;font-size:5.5px;color:#8c8c88">外观</div>
  <div class="a" style="left:6px;top:123px;width:9px;height:9px;background:#cc8c3f;border:1px solid #ddd"></div>
  <div class="t" style="left:21px;top:125.5px;font-size:5.5px;color:#999">填色</div>
  <div class="a" style="left:6px;top:138px;width:9px;height:9px;background:#eee"></div>
  <div class="a" style="left:8.5px;top:140.5px;width:4px;height:4px;background:#333"></div><svg class="a" style="left:6px;top:138px" width="9" height="9"><line x1="0" y1="9" x2="9" y2="0" stroke="#c82020" stroke-width="1.5"/></svg>
  <div class="t" style="left:21px;top:140px;font-size:5.5px;color:#bbb">描边</div>
  <div class="t" style="left:50px;top:136px;font-size:9px;color:#aaa">&#8597;</div>
  <div class="a" style="left:57px;top:136px;width:17px;height:10px;background:#30312d"></div>
  <div class="t" style="left:77px;top:137px;font-size:7px;color:#aaa">&#8964;</div>
  <div class="a" style="left:6px;top:152px;width:9px;height:9px;border:1px solid #777"></div>
  <div class="t" style="left:21px;top:155px;font-size:5.5px;color:#bbb">不透明度</div>
  <div class="a" style="left:47px;top:151px;width:26px;height:10px;background:#30312d"></div>
  <div class="t" style="left:49px;top:153px;font-size:6px;color:#c8c8c4;font-family:'Liberation Mono',monospace;font-size:5.8px">100%</div>
  <div class="t" style="left:78px;top:153px;font-size:7px;color:#aaa">&gt;</div>
  <div class="t" style="left:7px;top:169px;font-size:8px;color:#999;font-style:italic;font-family:'Liberation Serif',serif">fx.</div>
  <svg class="a" style="left:114px;top:184px" width="10" height="4"><circle cx="1.5" cy="2" r="1.1" fill="#c0c0bc"/><circle cx="5" cy="2" r="1.1" fill="#c0c0bc"/><circle cx="8.5" cy="2" r="1.1" fill="#c0c0bc"/></svg>
  <div class="a" style="left:0;top:194px;width:129px;height:1px;background:#373834"></div>
  <div class="t" style="left:5px;top:200px;font-size:5.5px;color:#8c8c88">快速操作</div>
  <div class="a" style="left:5px;top:211px;width:53px;height:11px;border:1px solid #52534f;border-radius:2px;background:#3e3f3b"></div>
  <div class="t" style="left:20px;top:215px;font-size:5.5px;color:#c0c0bc">位移路径</div>
  <div class="a" style="left:63px;top:211px;width:52px;height:11px;border:1px solid #52534f;border-radius:2px;background:#3e3f3b"></div>
  <div class="t" style="left:77px;top:215px;font-size:5.5px;color:#c0c0bc">重新着色</div>
  <div class="a" style="left:5px;top:227px;width:53px;height:11px;border:1px solid #52534f;border-radius:2px;background:#3e3f3b"></div>
  <div class="t" style="left:14px;top:231px;font-size:5.5px;color:#c0c0bc">对齐像素网格</div>
  <div class="a" style="left:63px;top:227px;width:52px;height:11px;border:1px solid #52534f;border-radius:2px;background:#3e3f3b"></div>
  <div class="t" style="left:83px;top:231px;font-size:5.5px;color:#c0c0bc">排列</div>
  <div class="a" style="left:5px;top:243px;width:98px;height:12px;border:1px solid #52534f;border-radius:2px;background:#3e3f3b"></div>
  <div class="t" style="left:36px;top:247px;font-size:5.5px;color:#c0c0bc">启动全局编辑</div>
  <div class="a" style="left:104px;top:243px;width:11px;height:12px;border:1px solid #52534f;border-radius:2px;background:#3e3f3b"></div>
  <div class="t" style="left:107px;top:245px;font-size:7px;color:#aaa">&#8964;</div>
</div>

<svg class="a" style="left:780px;top:0" width="121" height="40" viewBox="0 0 121 40">
  <g fill="none" stroke="#bdbdb9" stroke-width="0.9" opacity="0.85">
    <path d="M21 16 H39 Q43 16 43 20 V27 Q43 31 39 31 H24 Q20 31 20 27 V20 Q20 16 24 16 Z"/>
    <path d="M17 12 Q15 20 17 26 Q18 30 21 31 M17 20 H20 M17 25 H20 M43 20 H46 M43 25 H46"/>
    <path d="M26 13 V16 M31.5 12 V16 M37 13 V16 M24 14 H39"/>
  </g>
  <path d="M29 20.5 L35 23.5 L29 26.5 Z" fill="#bdbdb9" opacity="0.85"/>
  <text x="45" y="30" font-size="21" textLength="67" font-family="Liberation Sans, sans-serif" fill="#c8c8c4" opacity="0.75">虎课网</text>
</svg>
</body></html>
